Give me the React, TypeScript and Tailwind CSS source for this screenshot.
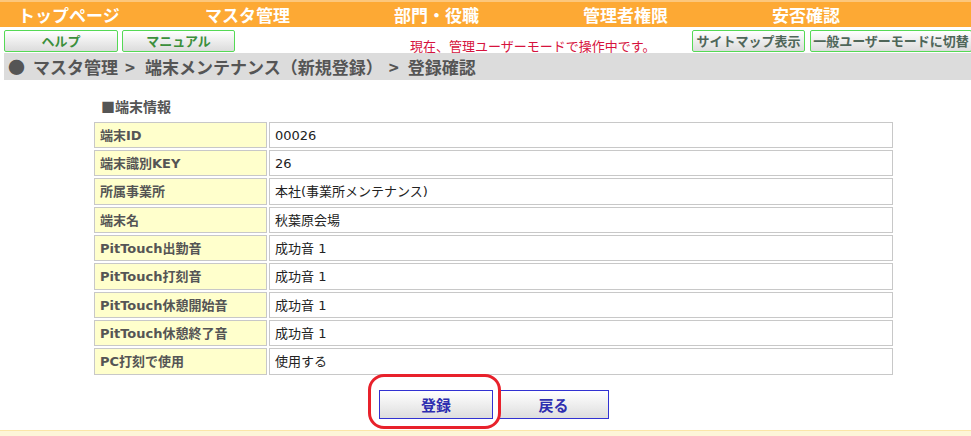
import React from "react";

const jp = { fontFamily: '"Noto Sans CJK JP", sans-serif' };
const vj = { fontFamily: '"DejaVu Sans", "Noto Sans CJK JP", sans-serif' };

const rows: [string, string][] = [
  ["端末ID", "00026"],
  ["端末識別KEY", "26"],
  ["所属事業所", "本社(事業所メンテナンス)"],
  ["端末名", "秋葉原会場"],
  ["PitTouch出勤音", "成功音 1"],
  ["PitTouch打刻音", "成功音 1"],
  ["PitTouch休憩開始音", "成功音 1"],
  ["PitTouch休憩終了音", "成功音 1"],
  ["PC打刻で使用", "使用する"],
];

const nav = ["トップページ", "マスタ管理", "部門・役職", "管理者権限", "安否確認"];

function GreenBtn({ label, w, color }: { label: string; w: string; color: string }) {
  return (
    <div
      className={`${w} shrink-0 h-[22px] flex items-center justify-center border border-[#55d955] rounded-[2px] bg-gradient-to-b from-white to-[#dcdcdc] text-[13px] font-bold leading-none whitespace-nowrap ${color}`}
      style={jp}
    >
      {label}
    </div>
  );
}

export default function App() {
  return (
    <div className="w-[971px] h-[436px] bg-white overflow-hidden flex flex-col relative" style={jp}>
      {/* top nav */}
      <div className="h-[27px] bg-[#fda934] border-t-[2px] border-[#fcc77c] flex items-center">
        {nav.map((n, i) => (
          <div
            key={n}
            className={`w-[189px] ${i === 0 ? "pl-[18px]" : "pl-[16px]"} text-white font-bold text-[17px] leading-none`}
          >
            {n}
          </div>
        ))}
      </div>
      {/* second row */}
      <div className="h-[27px] flex items-start pt-[3px] pl-[4px] overflow-hidden">
        <GreenBtn label="ヘルプ" w="w-[114px]" color="text-[#3b8f3b]" />
        <div className="w-[4px] shrink-0" />
        <GreenBtn label="マニュアル" w="w-[113px]" color="text-[#3b8f3b]" />
        <div className="w-[175px] shrink-0" />
        <div className="w-[282px] shrink-0 mt-[9px] text-[13px] leading-none text-[#d6133d] whitespace-nowrap">
          現在、管理ユーザーモードで操作中です。
        </div>
        <GreenBtn label="サイトマップ表示" w="w-[113px]" color="text-[#4f6659]" />
        <div className="w-[5px] shrink-0" />
        <GreenBtn label="一般ユーザーモードに切替" w="w-[162px]" color="text-[#4f6659]" />
      </div>
      {/* breadcrumb */}
      <div className="ml-[4px] h-[27px] bg-[#dcdcdc] flex items-center pl-[4px] text-[17px] font-bold text-[#555] leading-none whitespace-nowrap">
        <span>●</span>
        <span className="ml-[8px]">マスタ管理</span>
        <span className="ml-[7px]">&gt;</span>
        <span className="ml-[10px]">端末メンテナンス（新規登録）</span>
        <span className="ml-[6px]">&gt;</span>
        <span className="ml-[9px]">登録確認</span>
      </div>
      {/* section title */}
      <div className="ml-[101px] mt-[19px] text-[14px] font-bold text-[#555] leading-none">■端末情報</div>
      {/* table */}
      <div className="ml-[94px] mt-[9px] w-[799px] grid grid-cols-[173px_624px] gap-[2px]">
        {rows.map(([k, v], i) => (
          <React.Fragment key={k}>
            <div
              className={`${i % 3 === 2 ? "h-[27px]" : "h-[26px]"} border border-[#c8c8c8] bg-[#ffffcc] flex items-center pl-[5px] text-[13px] font-bold text-[#555] leading-none`}
              style={vj}
            >
              {k}
            </div>
            <div
              className={`${i % 3 === 2 ? "h-[27px]" : "h-[26px]"} border border-[#c8c8c8] bg-white flex items-center pl-[5px] text-[13px] text-[#222] leading-none`}
              style={vj}
            >
              {v}
            </div>
          </React.Fragment>
        ))}
      </div>
      {/* buttons */}
      <div className="mt-[15px] ml-[379px] flex gap-[5px]">
        <div className="w-[114px] h-[29px] border border-[#3232d2] bg-gradient-to-b from-white to-[#dedede] flex items-center justify-center text-[15px] font-bold text-[#2e2eb0] leading-none">
          登録
        </div>
        <div className="w-[111px] h-[29px] border border-[#3232d2] bg-gradient-to-b from-white to-[#dedede] flex items-center justify-center text-[15px] font-bold text-[#2e2eb0] leading-none">
          戻る
        </div>
      </div>
      <div className="mt-[11px] h-[6px] bg-[#fdf5d8] border-t border-[#fbe6a8]" />
      {/* red highlight */}
      <div className="absolute left-[368px] top-[374px] w-[133px] h-[55px] rounded-[16px] border-[3px] border-[#e8212b]" />
    </div>
  );
}
